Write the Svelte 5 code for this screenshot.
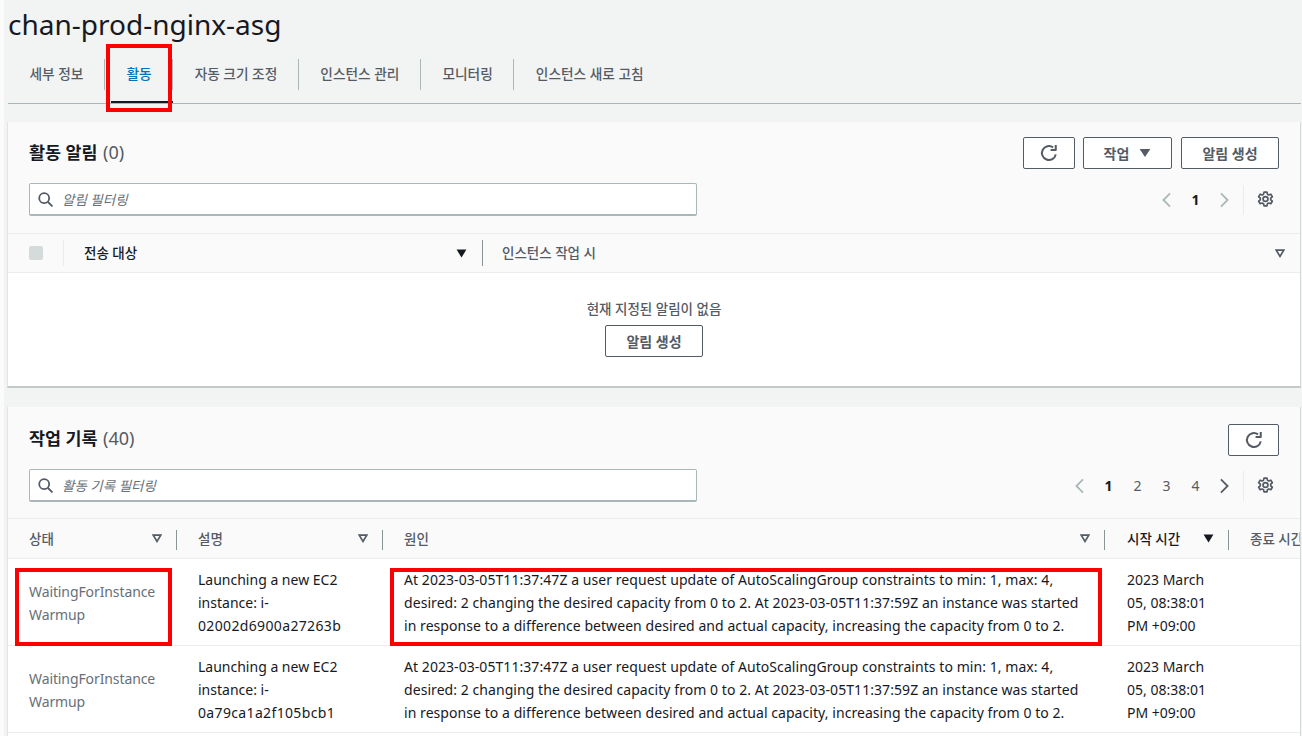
<script lang="ts">
	const tabs = ["세부 정보", "활동", "자동 크기 조정", "인스턴스 관리", "모니터링", "인스턴스 새로 고침"];
	const cause = "At 2023-03-05T11:37:47Z a user request update of AutoScalingGroup constraints to min: 1, max: 4, desired: 2 changing the desired capacity from 0 to 2. At 2023-03-05T11:37:59Z an instance was started in response to a difference between desired and actual capacity, increasing the capacity from 0 to 2.";
	const rows = [
		{ id: "02002d6900a27263b", cause, time: "2023 March 05, 08:38:01 PM +09:00" },
		{ id: "0a79ca1a2f105bcb1", cause, time: "2023 March 05, 08:38:01 PM +09:00" }
	];
	const historyHead = [
		{ label: "상태", sort: "off" },
		{ label: "설명", sort: "off" },
		{ label: "원인", sort: "off" },
		{ label: "시작 시간", sort: "on" },
		{ label: "종료 시간", sort: "none" }
	];
</script>

{#snippet refresh()}
	<svg class="ico" viewBox="0 0 16 16" fill="none" stroke="currentColor" stroke-width="1.8">
		<path d="M14 9.2A6.2 6.2 0 1 1 11.6 3" />
		<path d="M14 .8v4.6H9.4" stroke-linejoin="round" />
	</svg>
{/snippet}

{#snippet search()}
	<svg class="search-ico" viewBox="0 0 16 16" fill="none" stroke="currentColor" stroke-width="1.9">
		<circle cx="6.6" cy="6.6" r="5.3" />
		<path d="M10.4 10.4 15.4 15.4" />
	</svg>
{/snippet}

{#snippet gear()}
	<svg class="gear" viewBox="0 0 16 16" fill="none" stroke="currentColor" stroke-width="1.6">
		<path d="M6.6 1h2.8l.4 2 1.3.7 1.9-.7 1.4 2.4-1.5 1.3v1.6l1.5 1.3-1.4 2.4-1.9-.7-1.3.7-.4 2H6.6l-.4-2-1.3-.7-1.9.7-1.4-2.4 1.5-1.3V6.7L1.6 5.4 3 3l1.9.7 1.3-.7z" stroke-linejoin="round" />
		<circle cx="8" cy="7.5" r="2.3" />
	</svg>
{/snippet}

{#snippet chevron(dir: string, dim: boolean)}
	<span class="chev" class:dim>
		<svg viewBox="0 0 12 18" fill="none" stroke="currentColor" stroke-width="2">
			{#if dir === "left"}
				<path d="M10 1.5 2.5 9l7.5 7.5" />
			{:else}
				<path d="M2 1.5 9.5 9 2 16.5" />
			{/if}
		</svg>
	</span>
{/snippet}

{#snippet sort(kind: string)}
	{#if kind === "on"}
		<svg class="sort-on" viewBox="0 0 12 10"><path d="M0.5 0.5h11L6 9.5z" fill="#16191f" /></svg>
	{:else if kind === "off"}
		<svg class="sort-off" viewBox="0 0 10 9" fill="none" stroke="#545b64" stroke-width="1.7"><path d="M1.2 1.2h7.6L5 7.4z" /></svg>
	{/if}
{/snippet}

<div class="page">
	<h1>chan-prod-nginx-asg</h1>

	<nav class="tabs">
		{#each tabs as tab, i}
			<div class="tab" class:active={i === 1}><span>{tab}</span></div>
		{/each}
	</nav>

	<section class="card first">
		<header class="head">
			<h2>활동 알림 <em>(0)</em></h2>
			<div class="actions">
				<button class="btn icon">{@render refresh()}</button>
				<button class="btn drop">작업 <svg class="caret" viewBox="0 0 12 9"><path d="M0 0h12L6 9z" fill="#545b64" /></svg></button>
				<button class="btn make">알림 생성</button>
			</div>
		</header>
		<div class="filter-row">
			<div class="filter">{@render search()}<span>알림 필터링</span></div>
			<div class="pager">
				{@render chevron("left", true)}
				<b>1</b>
				{@render chevron("right", true)}
				<i class="bar"></i>
				{@render gear()}
			</div>
		</div>
		<div class="alarm-head">
			<div class="check-cell"><span class="check"></span></div>
			<div class="alarm-col target"><strong>전송 대상</strong>{@render sort("on")}</div>
			<div class="alarm-col when"><span>인스턴스 작업 시</span>{@render sort("off")}</div>
		</div>
		<div class="empty">
			<p>현재 지정된 알림이 없음</p>
			<button class="btn make-empty">알림 생성</button>
		</div>
	</section>

	<section class="card second">
		<header class="head">
			<h2>작업 기록 <em>(40)</em></h2>
			<div class="actions">
				<button class="btn icon">{@render refresh()}</button>
			</div>
		</header>
		<div class="filter-row">
			<div class="filter">{@render search()}<span>활동 기록 필터링</span></div>
			<div class="pager">
				{@render chevron("left", true)}
				<b>1</b><span class="num">2</span><span class="num">3</span><span class="num">4</span>
				{@render chevron("right", false)}
				<i class="bar"></i>
				{@render gear()}
			</div>
		</div>
		<div class="grid header">
			{#each historyHead as col, i}
				<div class="th" class:sorted={col.sort === "on"}>
					<span>{col.label}</span>
					{@render sort(col.sort)}
					{#if i < 4}<i class="sep"></i>{/if}
				</div>
			{/each}
		</div>
		{#each rows as row}
			<div class="grid row">
				<div class="td status">WaitingForInstance<wbr />Warmup</div>
				<div class="td">Launching a new EC2 instance: i-<span class="iid">{row.id}</span></div>
				<div class="td cause">{row.cause}</div>
				<div class="td time">{row.time}</div>
				<div class="td"></div>
			</div>
		{/each}
		<div class="grid row"></div>
	</section>

	<!-- annotations drawn on top of the screenshot -->
	<div class="mark tab-mark"></div>
	<div class="mark status-mark"></div>
	<div class="mark cause-mark"></div>
</div>

<style>
	:global(body) {
		background: #fbfbfb;
	}
	.page {
		position: relative;
		height: 736px;
		margin-left: 4px;
		overflow: hidden;
		padding: 0 1px 0 3px;
		box-sizing: border-box;
		background: #f2f3f3;
		color: #16191f;
		font-family: "Noto Sans", "Noto Sans CJK KR", sans-serif;
		font-size: 14px;
	}
	h1 {
		margin: 0;
		padding: 5px 0 0 1px;
		height: 45px;
		box-sizing: border-box;
		font-size: 28px;
		line-height: 38px;
		font-weight: 400;
		color: #16191f;
	}
	.tabs {
		display: flex;
		height: 58px;
		margin-left: 1px;
		border-bottom: 1px solid #aab7b8;
	}
	.tab {
		position: relative;
		padding: 0 21.5px 0 21.5px;
		height: 58px;
		display: flex;
		align-items: flex-start;
		font-size: 13.7px;
		font-weight: 500;
		color: #545b64;
		white-space: nowrap;
	}
	.tab span {
		margin-top: 17px;
		line-height: 24px;
	}
	.tab:not(:last-child)::after {
		content: "";
		position: absolute;
		right: 0;
		top: 14px;
		height: 31px;
		width: 1px;
		background: #aab7b8;
	}
	.tab.active {
		color: #0073bb;
	}
	.tab.active::before {
		content: "";
		position: absolute;
		left: 6px;
		right: 0;
		bottom: 0;
		height: 2px;
		background: #16191f;
	}
	.card {
		background: #fafafa;
		overflow: hidden;
		border-left: 1px solid #e1e4e4;
		border-right: 1px solid #d5dbdb;
	}
	.first {
		margin-top: 18px;
		height: 266px;
		box-sizing: border-box;
		border-bottom: 2px solid #c2c9c9;
	}
	.second {
		margin-top: 19px;
	}
	.head {
		display: flex;
		justify-content: space-between;
		align-items: flex-start;
		height: 61px;
		padding: 15px 21px 0 21px;
		box-sizing: border-box;
	}
	.second .head {
		height: 62px;
		padding-top: 17px;
	}
	.second h2 {
		margin-top: -1px;
	}
	.second .btn.icon {
		width: 51px;
	}
	h2 {
		margin: 0;
		font-size: 17.4px;
		line-height: 31px;
		font-weight: 700;
		color: #16191f;
	}
	h2 em {
		font-size: 18px;
		font-style: normal;
		font-weight: 400;
		color: #545b64;
		margin-left: 1px;
	}
	.actions {
		display: flex;
		gap: 8px;
	}
	.btn {
		height: 32px;
		box-sizing: border-box;
		border: 1px solid #545b64;
		border-radius: 2px;
		background: #fff;
		color: #545b64;
		font: inherit;
		font-weight: 700;
		font-size: 14px;
		padding: 0;
		display: flex;
		align-items: center;
		justify-content: center;
	}
	.btn.icon {
		width: 52px;
	}
	.btn.drop {
		width: 89px;
		gap: 10px;
	}
	.btn.make {
		width: 98px;
		margin-left: 1px;
	}
	.ico {
		width: 18px;
		height: 18px;
	}
	.caret {
		width: 12px;
		height: 8px;
	}
	.filter-row {
		display: flex;
		justify-content: space-between;
		align-items: center;
		height: 33px;
		padding: 0 26px 0 21px;
	}
	.filter {
		width: 668px;
		height: 33px;
		box-sizing: border-box;
		background: #fff;
		border: 1px solid #aab7b8;
		border-bottom: 2px solid #aab7b8;
		border-radius: 2px;
		display: flex;
		align-items: center;
		padding-left: 8px;
		gap: 9px;
		font-size: 13.5px;
		font-style: italic;
		color: #687078;
	}
	.search-ico {
		width: 15px;
		height: 15px;
		color: #545b64;
	}
	.pager {
		display: flex;
		align-items: center;
		color: #545b64;
		font-size: 14px;
		line-height: 20px;
	}
	.pager b,
	.pager .num {
		width: 29px;
		text-align: center;
	}
	.pager b {
		color: #16191f;
		font-weight: 700;
	}
	.chev {
		width: 29px;
		display: flex;
		justify-content: center;
		color: #545b64;
	}
	.chev svg {
		width: 11px;
		height: 16px;
	}
	.chev.dim {
		color: #aab7b8;
	}
	.bar {
		display: block;
		width: 1px;
		height: 30px;
		background: #eaeded;
		margin: 0 13px 0 4px;
	}
	.gear {
		width: 17px;
		height: 17px;
		color: #545b64;
	}
	.alarm-head {
		display: grid;
		grid-template-columns: 55px 419px 1fr;
		height: 40px;
		box-sizing: border-box;
		margin-top: 17px;
		border-top: 1px solid #eaeded;
		border-bottom: 1px solid #eaeded;
		align-items: center;
		font-size: 13.5px;
	}
	.check-cell {
		padding-left: 21px;
		display: flex;
	}
	.check {
		width: 14px;
		height: 14px;
		border-radius: 2px;
		background: #d5dbdb;
	}
	.alarm-col {
		display: flex;
		align-items: center;
		justify-content: space-between;
		font-weight: 500;
		color: #545b64;
		padding: 0 15px 0 20px;
		height: 26px;
		border-left: 1px solid #eaeded;
		box-sizing: border-box;
	}
	.alarm-col strong {
		color: #16191f;
		font-weight: 500;
		margin-top: -3px;
	}
	.alarm-col span {
		margin-top: -3px;
		margin-left: -1px;
	}
	.alarm-col.when {
		border-left-color: #879596;
	}
	.sort-on {
		width: 11px;
		height: 9px;
	}
	.sort-off {
		width: 10px;
		height: 9px;
	}
	.empty {
		background: #fff;
		display: flex;
		flex-direction: column;
		align-items: center;
		height: 114px;
		box-sizing: border-box;
		padding-top: 26px;
		font-size: 13.5px;
	}
	.empty p {
		margin: 0;
		line-height: 20px;
		font-weight: 500;
		color: #545b64;
	}
	.make-empty {
		width: 98px;
		margin-top: 6px;
	}
	.grid {
		display: grid;
		grid-template-columns: 169px 206px 722px 124px 1fr;
	}
	.header {
		height: 41px;
		margin-top: 16px;
		border-top: 1px solid #eaeded;
		border-bottom: 1px solid #eaeded;
		box-sizing: border-box;
		align-items: center;
	}
	.th {
		position: relative;
		display: flex;
		align-items: center;
		justify-content: space-between;
		padding: 0 15px 0 21px;
		font-size: 13.5px;
		font-weight: 500;
		color: #545b64;
		white-space: nowrap;
		min-width: 0;
	}
	.th span {
		margin-top: -2px;
	}
	.th.sorted span {
		color: #16191f;
		margin-left: 1px;
	}
	.sep {
		position: absolute;
		right: 0;
		top: 0;
		height: 20px;
		width: 1px;
		background: #879596;
	}
	.row {
		background: #fff;
		border-bottom: 1px solid #eaeded;
		height: 87px;
		box-sizing: border-box;
	}
	.td {
		padding: 9px 20px 0 21px;
		line-height: 23px;
		color: #16191f;
		font-size: 14px;
		overflow-wrap: anywhere;
	}
	.td.status {
		padding: 21px 9px 0 21px;
		color: #687078;
		letter-spacing: -0.1px;
	}
	.td.cause {
		letter-spacing: 0.06px;
	}
	.td.time {
		padding-left: 22px;
	}
	.iid {
		letter-spacing: 0.35px;
	}
	.mark {
		position: absolute;
		border: 4px solid #f00;
		box-sizing: border-box;
		pointer-events: none;
	}
	.tab-mark {
		left: 102px;
		top: 44px;
		width: 66px;
		height: 68px;
	}
	.status-mark {
		left: 11px;
		top: 568px;
		width: 157px;
		height: 78px;
	}
	.cause-mark {
		left: 386px;
		top: 568px;
		width: 712px;
		height: 78px;
	}
</style>
